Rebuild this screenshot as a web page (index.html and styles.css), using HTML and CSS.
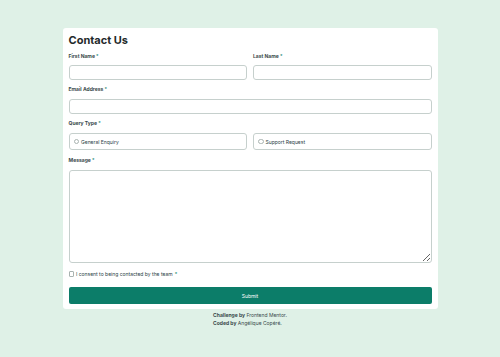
FILE: index.html
```html
<!DOCTYPE html>
<html lang="en">
<head>
    <meta charset="UTF-8">
    <meta name="viewport" content="width=device-width, initial-scale=1.0">
    <title>Contact Us</title>
    <link rel="stylesheet" href="styles.css">
</head>
<body>
    <main class="card">
        <h1>Contact Us</h1>
        <form class="form">
            <div class="row">
                <div class="field first">
                    <label for="firstName">First Name <span class="req">*</span></label>
                    <input type="text" id="firstName">
                </div>
                <div class="field first">
                    <label for="lastName">Last Name <span class="req">*</span></label>
                    <input type="text" id="lastName">
                </div>
            </div>
            <div class="field">
                <label for="email">Email Address <span class="req">*</span></label>
                <input type="email" id="email">
            </div>
            <div class="field">
                <span class="label">Query Type <span class="req">*</span></span>
                <div class="row">
                    <label class="option"><span class="radio"></span>General Enquiry</label>
                    <label class="option"><span class="radio"></span>Support Request</label>
                </div>
            </div>
            <div class="field message">
                <label for="message">Message <span class="req">*</span></label>
                <textarea id="message"></textarea>
            </div>
            <label class="consent"><span class="check"></span>I consent to being contacted by the team <span class="req">*</span></label>
            <button type="button" class="submit">Submit</button>
        </form>
    </main>
    <footer class="attribution">
        <p><b>Challenge by</b> Frontend Mentor.</p>
        <p><b>Coded by</b> Angélique Copéré.</p>
    </footer>
</body>
</html>
```

FILE: styles.css
```css
body {
    font-family: Inter, "Liberation Sans", sans-serif;
    margin: 0;
    padding: 0;
    background-color: #dff1e7; /* pale green */
    color: #2a4144;
    display: flex;
    flex-direction: column;
    align-items: center;
}
.card {
    width: 363px;
    margin-top: 28px;
    padding: 4px 6px 5px;
    background-color: #fff;
    border-radius: 3px;
}
h1 {
    margin: 0;
    font-size: 11px;
    line-height: 16px;
    font-weight: 700;
    color: #1f2a2b;
}
.form {
    display: flex;
    flex-direction: column;
}
.row {
    display: flex;
    gap: 6px;
}
.row > * {
    flex: 1;
    min-width: 0;
}
.field {
    display: flex;
    flex-direction: column;
}
.form > .row {
    margin-top: 4px;
}
.form > .field {
    margin-top: 5px;
}
.form > .message {
    margin-top: 6px;
}
.field label,
.field .label {
    font-size: 5px;
    line-height: 8px;
    font-weight: 700;
    color: #3a4a4c;
    margin-bottom: 6px;
}
.field.first label {
    margin-bottom: 5px;
}
.req {
    color: #0c7d69;
    font-weight: 400;
}
input,
textarea {
    box-sizing: border-box;
    width: 100%;
    height: 15px;
    border: 1px solid #c6d0cd;
    border-radius: 3px;
    background: #fff;
    margin: 0;
}
textarea {
    height: 93px;
    resize: vertical;
}
.field .option {
    box-sizing: border-box;
    height: 17px;
    margin: 0;
    display: flex;
    align-items: center;
    gap: 2px;
    padding-left: 4px;
    border: 1px solid #c6d0cd;
    border-radius: 3px;
    font-size: 5px;
    font-weight: 400;
    color: #2a4144;
}
.radio {
    width: 3.5px;
    height: 3.5px;
    border: 0.5px solid #a9b3b1;
    border-radius: 50%;
}
.consent {
    display: flex;
    align-items: center;
    gap: 2px;
    margin-top: 7px;
    font-size: 5px;
    line-height: 8px;
    color: #2a4144;
}
.check {
    width: 3.5px;
    height: 3.5px;
    border: 0.5px solid #a9b3b1;
    border-radius: 1px;
}
.submit {
    margin-top: 9px;
    height: 17px;
    border: none;
    border-radius: 2px;
    background-color: #0c7d69;
    color: #fff;
    font-family: inherit;
    font-size: 5px;
}
.attribution {
    margin-top: 2px;
    font-size: 5px;
    line-height: 8px;
    color: #3a4a4c;
}
.attribution p {
    margin: 0;
}
```
